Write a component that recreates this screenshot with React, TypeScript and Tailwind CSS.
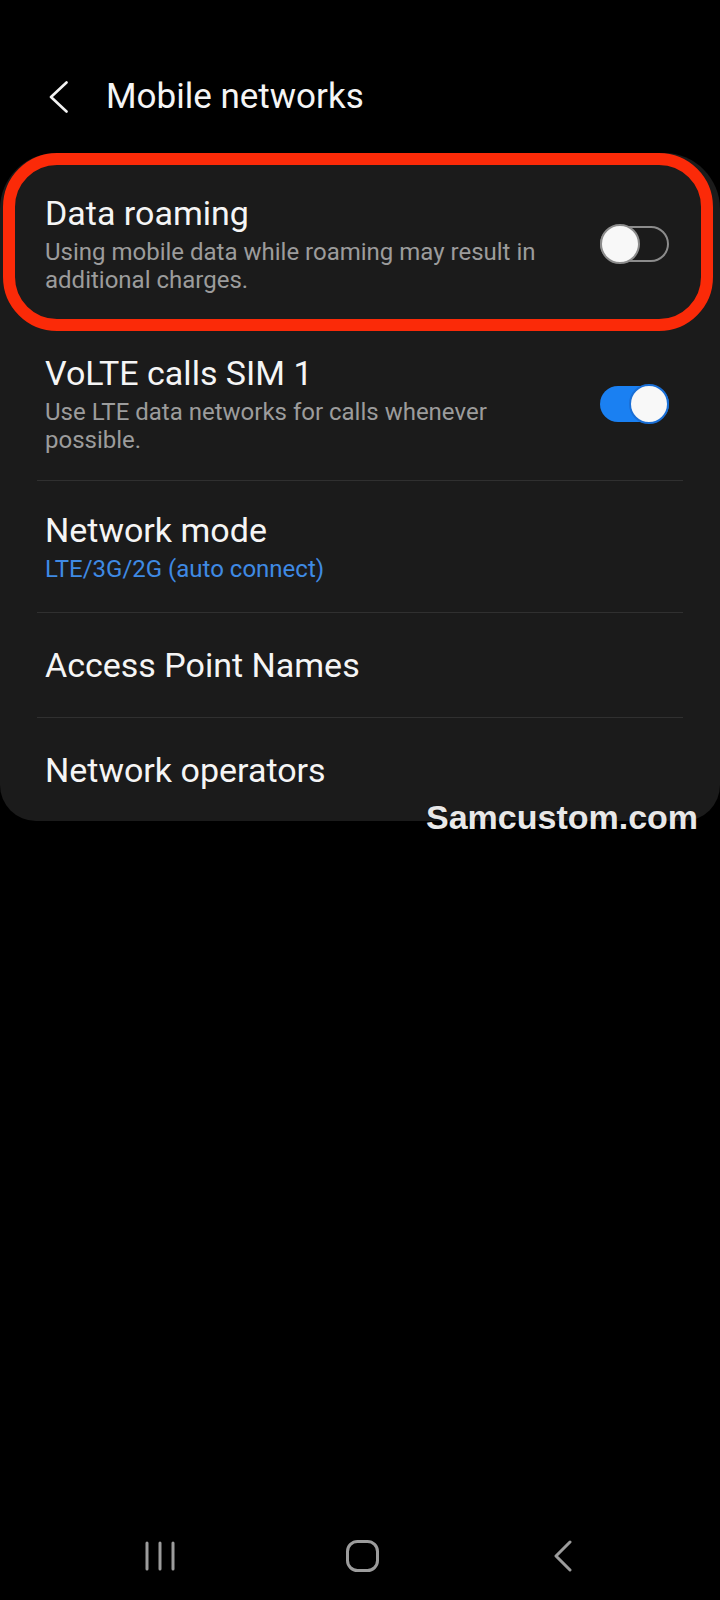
import React from 'react';

const font = { fontFamily: 'Roboto, "Noto Sans", sans-serif' };

type ToggleProps = { on: boolean };

const Toggle: React.FC<ToggleProps> = ({ on }) => (
  <div className="relative w-[69px] h-[40px] flex items-center shrink-0">
    <div
      className={
        on
          ? 'w-full h-[36px] rounded-full bg-[#1a80f2]'
          : 'w-full h-[36px] rounded-full border-2 border-[#8c8c8c]'
      }
    />
    <div
      className={
        on
          ? 'absolute right-0 top-0 w-[40px] h-[40px] rounded-full bg-[#f8f8f8] border-2 border-[#1a6fd6]'
          : 'absolute left-0 top-0 w-[40px] h-[40px] rounded-full bg-[#f8f8f8] border-2 border-[#8c8c8c]'
      }
    />
  </div>
);

const Divider = () => <div className="h-px bg-[#303030] mx-[37px]" />;

export default function App() {
  return (
    <div className="relative w-[720px] h-[1600px] bg-black flex flex-col overflow-hidden" style={font}>
      {/* Header */}
      <div className="flex items-center h-[62px] mt-[66px] mb-[25px] pl-[48px]">
        <svg width="20" height="32" viewBox="0 0 20 32" fill="none">
          <path d="M18.5 1.5 L3 16 L18.5 30.5" stroke="#f2f2f2" strokeWidth="2.6" strokeLinecap="round" strokeLinejoin="round" />
        </svg>
        <h1 className="ml-[38px] text-[35px] leading-[40px] text-[#f5f5f5]">Mobile networks</h1>
      </div>

      {/* Settings card */}
      <div className="relative w-full rounded-t-[56px] rounded-b-[36px] bg-[#1b1b1b]">
        <div className="flex items-center pl-[45px] pr-[51px] pt-[40px] pb-[30px]">
          <div className="flex-1 pr-[30px]">
            <div className="text-[34px] leading-[40px] text-[#f5f5f5]">Data roaming</div>
            <div className="mt-[5px] text-[24px] leading-[28px] text-[#9c9c9c]">
              Using mobile data while roaming may result in additional charges.
            </div>
          </div>
          <Toggle on={false} />
        </div>

        <div className="flex items-center pl-[45px] pr-[51px] pt-[29px] pb-[26px]">
          <div className="flex-1 pr-[30px]">
            <div className="text-[34px] leading-[40px] text-[#f5f5f5]">VoLTE calls SIM 1</div>
            <div className="mt-[5px] text-[24px] leading-[28px] text-[#9c9c9c]">
              Use LTE data networks for calls whenever possible.
            </div>
          </div>
          <Toggle on={true} />
        </div>
        <Divider />

        <div className="pl-[45px] pr-[51px] pt-[29px] pb-[29px]">
          <div className="text-[34px] leading-[40px] text-[#f5f5f5]">Network mode</div>
          <div className="mt-[5px] text-[24px] leading-[28px] text-[#3f8ae4]">LTE/3G/2G (auto connect)</div>
        </div>
        <Divider />

        <div className="pl-[45px] pr-[51px] pt-[32px] pb-[32px]">
          <div className="text-[34px] leading-[40px] text-[#f5f5f5]">Access Point Names</div>
        </div>
        <Divider />

        <div className="pl-[45px] pr-[51px] pt-[32px] pb-[31px]">
          <div className="text-[34px] leading-[40px] text-[#f5f5f5]">Network operators</div>
        </div>

        {/* red highlight annotation */}
        <div className="absolute left-[3px] top-0 w-[710px] h-[178px] rounded-[54px] border-[12px] border-[#fb2a08]" />
      </div>

      {/* watermark */}
      <div
        className="absolute left-[426px] top-[797px] text-[34px] leading-[40px] font-bold text-[#e8e8e8]"
        style={{ fontFamily: '"Liberation Sans", Arial, sans-serif', textShadow: '0 1px 2px rgba(0,0,0,0.6)' }}
      >
        Samcustom.com
      </div>

      <div className="flex-1" />

      {/* Navigation bar */}
      <div className="h-[88px] flex items-center justify-center">
        <div className="w-[200px] flex justify-center">
          <svg width="30" height="30" viewBox="0 0 30 30" fill="none">
            <path d="M2 2 V28 M15 2 V28 M28 2 V28" stroke="#9c9c9c" strokeWidth="3" strokeLinecap="round" />
          </svg>
        </div>
        <div className="w-[200px] flex justify-center pl-[4px]">
          <svg width="33" height="32" viewBox="0 0 33 32" fill="none">
            <rect x="1.5" y="1.5" width="30" height="29" rx="10" stroke="#9c9c9c" strokeWidth="3" />
          </svg>
        </div>
        <div className="w-[200px] flex justify-center pl-[6px]">
          <svg width="20" height="32" viewBox="0 0 20 32" fill="none">
            <path d="M17 2 L3 16 L17 30" stroke="#9c9c9c" strokeWidth="3" strokeLinecap="round" strokeLinejoin="round" />
          </svg>
        </div>
      </div>
    </div>
  );
}
